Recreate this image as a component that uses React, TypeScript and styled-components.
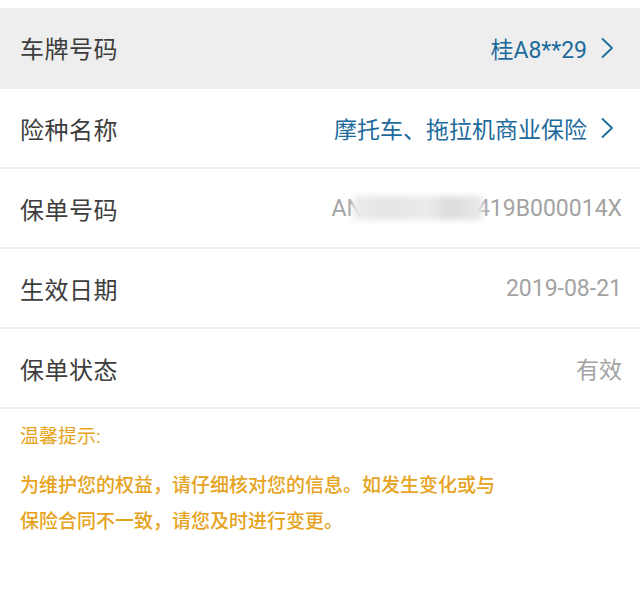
import styled, { createGlobalStyle } from 'styled-components'

const Global = createGlobalStyle`
  html, body {
    margin: 0;
    padding: 0;
    background: #fff;
  }
  body {
    font-family: Roboto, "Noto Sans CJK SC", sans-serif;
  }
`

const Page = styled.div`
  width: 640px;
  height: 595px;
  padding-top: 8px;
  box-sizing: border-box;
  background: #fff;
  overflow: hidden;
`

const Row = styled.div<{ $active?: boolean }>`
  height: 80px;
  box-sizing: border-box;
  display: flex;
  align-items: center;
  justify-content: space-between;
  padding: 0 18px 0 20px;
  background: ${p => (p.$active ? '#eeeeee' : '#fff')};
  border-bottom: 2px solid #eeeeee;
  &:first-child {
    height: 81px;
  }
`

const Label = styled.span`
  font-size: 24px;
  color: #3d3d3d;
  letter-spacing: 0.5px;
`

const Value = styled.span<{ $link?: boolean }>`
  display: flex;
  align-items: center;
  font-size: 23px;
  color: ${p => (p.$link ? '#1d6a9c' : '#a3a3a3')};
`

const Chevron = styled.svg`
  width: 14px;
  height: 22px;
  margin-left: 13px;
  margin-right: 8px;
`

const Blur = styled.span`
  display: inline-block;
  width: 130px;
  height: 24px;
  margin: 0 -6px 0 -10px;
  background: linear-gradient(90deg, #ececec 0%, #e4e4e4 30%, #ececec 55%, #dcdcdc 75%, #eaeaea 100%);
  filter: blur(3px);
`

const Tip = styled.div`
  padding: 14px 20px 0 20px;
  color: #e6a321;
`

const TipTitle = styled.div`
  font-size: 19px;
  line-height: 28px;
`

const TipText = styled.p`
  margin: 17px 0 0;
  max-width: 480px;
  font-size: 19px;
  font-weight: 500;
  line-height: 36px;
`

const Arrow = () => (
  <Chevron viewBox="0 0 14 22">
    <path d="M2 1.5 L12 11 L2 20.5" fill="none" stroke="#1d6a9c" strokeWidth="1.8" strokeLinejoin="round" />
  </Chevron>
)

export default function App() {
  return (
    <Page>
      <Global />
      <Row $active>
        <Label>车牌号码</Label>
        <Value $link>
          桂A8**29
          <Arrow />
        </Value>
      </Row>
      <Row>
        <Label>险种名称</Label>
        <Value $link>
          摩托车、拖拉机商业保险
          <Arrow />
        </Value>
      </Row>
      <Row>
        <Label>保单号码</Label>
        <Value>
          AN
          <Blur />
          419B000014X
        </Value>
      </Row>
      <Row>
        <Label>生效日期</Label>
        <Value>2019-08-21</Value>
      </Row>
      <Row>
        <Label>保单状态</Label>
        <Value>有效</Value>
      </Row>
      <Tip>
        <TipTitle>温馨提示:</TipTitle>
        <TipText>
          为维护您的权益，请仔细核对您的信息。如发生变化或与保险合同不一致，请您及时进行变更。
        </TipText>
      </Tip>
    </Page>
  )
}
